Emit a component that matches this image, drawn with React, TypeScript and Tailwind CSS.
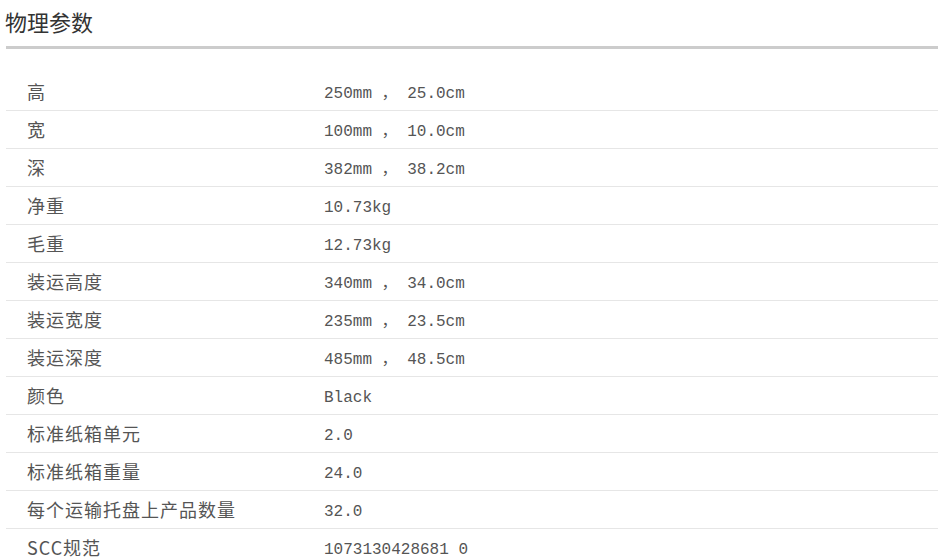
const rows: [string, string][] = [
  ["高", "250mm ， 25.0cm"],
  ["宽", "100mm ， 10.0cm"],
  ["深", "382mm ， 38.2cm"],
  ["净重", "10.73kg"],
  ["毛重", "12.73kg"],
  ["装运高度", "340mm ， 34.0cm"],
  ["装运宽度", "235mm ， 23.5cm"],
  ["装运深度", "485mm ， 48.5cm"],
  ["颜色", "Black"],
  ["标准纸箱单元", "2.0"],
  ["标准纸箱重量", "24.0"],
  ["每个运输托盘上产品数量", "32.0"],
  ["SCC规范", "1073130428681 0"],
];

const App = () => {
  return (
    <div className="w-[940px] h-[560px] overflow-hidden bg-white pl-[6px] pr-[2px] pt-[6px] font-['Noto_Sans_CJK_SC',sans-serif]">
      <h2 className="text-[22px] leading-[30px] text-[#333] mb-[10px] -ml-px">物理参数</h2>
      <div className="h-[3px] bg-[#cccccc]"></div>
      <div className="mt-[24px]">
        {rows.map(([label, value]) => (
          <div key={label} className="flex h-[38px] items-center border-b border-[#e6e6e6]">
            <div className="w-[318px] pl-[21px] text-[18px] tracking-[1px] text-[#555] font-['Noto_Sans_CJK_SC',sans-serif]">
              {label}
            </div>
            <div className="pt-[5px] text-[16px] text-[#555] whitespace-pre font-['Liberation_Mono','Noto_Sans_CJK_SC',monospace]">
              {value}
            </div>
          </div>
        ))}
      </div>
    </div>
  )
}

export default App
